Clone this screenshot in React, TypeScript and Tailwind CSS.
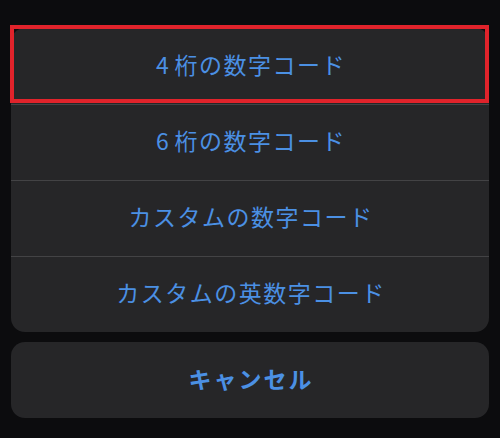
import React from "react";

const font = { fontFamily: '"Noto Sans CJK JP", "Noto Sans", sans-serif' };

export default function App() {
  const rows: [string | null, string][] = [
    ["4", "桁の数字コード"],
    ["6", "桁の数字コード"],
    [null, "カスタムの数字コード"],
    [null, "カスタムの英数字コード"],
  ];
  return (
    <div className="w-[500px] h-[438px] bg-[#0c0c0e] overflow-hidden pt-[28px] pl-[11px] pr-[11px]" style={font}>
      <div className="flex flex-col gap-[10px]">
        <div className="relative rounded-[14px] bg-[#262628] flex flex-col">
          {rows.map(([d, r], i) => (
            <div
              key={r + i}
              className={`h-[76px] pb-[4px] pl-[2px] flex items-center justify-center text-[23px] tracking-[1.5px] text-[#4b90e4] font-normal ${i > 0 ? "border-t border-[#434345]" : ""}`}
            >
              {d && <span className="mr-[4px]">{d}</span>}
              <span>{r}</span>
            </div>
          ))}
          <div className="absolute left-[-1px] top-[-3px] w-[479px] h-[78px] border-[4px] border-[#e0232b] pointer-events-none" />
        </div>
        <div className="h-[76px] pb-[3px] pl-[2px] rounded-[14px] bg-[#262628] flex items-center justify-center text-[23px] tracking-[2px] font-bold text-[#4b90e4]">
          キャンセル
        </div>
      </div>
    </div>
  );
}
